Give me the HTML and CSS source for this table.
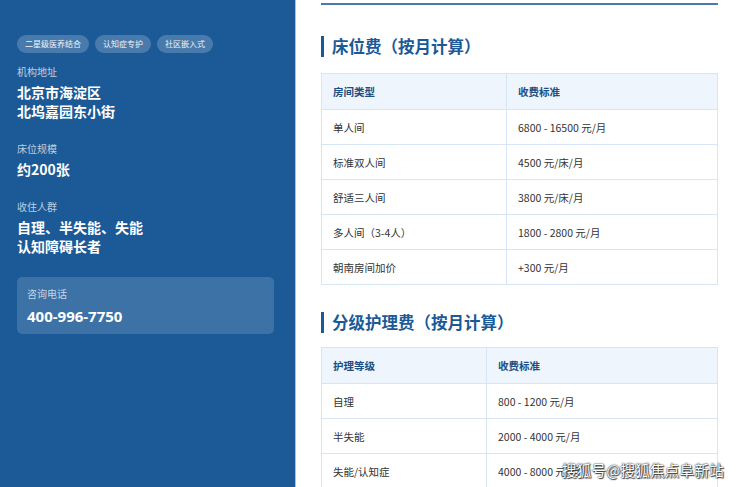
FILE: index.html
```html
<!DOCTYPE html>
<html lang="zh-CN">
<head>
<meta charset="utf-8">
<link rel="stylesheet" href="styles.css">
</head>
<body>
<div class="page">
  <aside class="sidebar">
    <div class="tags">
      <span class="tag">二星级医养结合</span>
      <span class="tag">认知症专护</span>
      <span class="tag">社区嵌入式</span>
    </div>
    <div class="info">
      <div class="label">机构地址</div>
      <div class="value">北京市海淀区<br>北坞嘉园东小街</div>
    </div>
    <div class="info">
      <div class="label">床位规模</div>
      <div class="value">约200张</div>
    </div>
    <div class="info">
      <div class="label">收住人群</div>
      <div class="value">自理、半失能、失能<br>认知障碍长者</div>
    </div>
    <div class="contact">
      <div class="label">咨询电话</div>
      <div class="phone">400-996-7750</div>
    </div>
  </aside>
  <main class="content">
    <div class="topline"></div>
    <section class="block">
      <h2 class="title">床位费（按月计算）</h2>
      <table class="fees fees-bed">
        <thead><tr><th>房间类型</th><th>收费标准</th></tr></thead>
        <tbody>
          <tr><td>单人间</td><td>6800 - 16500 元/月</td></tr>
          <tr><td>标准双人间</td><td>4500 元/床/月</td></tr>
          <tr><td>舒适三人间</td><td>3800 元/床/月</td></tr>
          <tr><td>多人间（3-4人）</td><td>1800 - 2800 元/月</td></tr>
          <tr><td>朝南房间加价</td><td>+300 元/月</td></tr>
        </tbody>
      </table>
    </section>
    <section class="block block-2">
      <h2 class="title">分级护理费（按月计算）</h2>
      <table class="fees fees-care">
        <thead><tr><th>护理等级</th><th>收费标准</th></tr></thead>
        <tbody>
          <tr><td>自理</td><td>800 - 1200 元/月</td></tr>
          <tr><td>半失能</td><td>2000 - 4000 元/月</td></tr>
          <tr><td>失能/认知症</td><td>4000 - 8000 元/月</td></tr>
        </tbody>
      </table>
    </section>
    <div class="watermark">搜狐号@搜狐焦点阜新站</div>
  </main>
</div>
</body>
</html>
```

FILE: styles.css
```css
html, body {
  margin: 0;
  padding: 0;
  height: 100%;
  overflow: hidden;
  background: #ffffff;
}
body {
  font-family: "Noto Sans CJK SC", "Noto Sans", sans-serif;
}
.page {
  display: flex;
  height: 487px;
  overflow: hidden;
}
.sidebar {
  flex: 0 0 296px;
  width: 296px;
  box-sizing: border-box;
  background: #1b5a96;
  border-right: 1px solid #a8c4e2;
  padding: 35px 21px 0 17px;
  color: #fff;
}
.tags {
  display: flex;
  gap: 6px;
  margin-bottom: 12px;
}
.tag {
  display: inline-block;
  background: rgba(255, 255, 255, 0.2);
  border-radius: 9px;
  font-size: 8px;
  line-height: 18px;
  height: 18px;
  padding: 0 8px;
  color: #eef3f9;
}
.info {
  margin-bottom: 21px;
}
.label {
  font-size: 10px;
  line-height: 14px;
  color: rgba(255, 255, 255, 0.72);
  margin-bottom: 4px;
}
.value {
  font-size: 14px;
  line-height: 19px;
  font-weight: 700;
  color: #fff;
}
.contact {
  background: rgba(255, 255, 255, 0.15);
  border-radius: 5px;
  padding: 10px 10px 7px;
  width: 257px;
  box-sizing: border-box;
}
.phone {
  font-family: "Open Sans", "Noto Sans", sans-serif;
  font-size: 15px;
  line-height: 22px;
  font-weight: 700;
  color: #fff;
}
.content {
  position: relative;
  flex: 1;
  padding: 3px 22px 0 25px;
}
.topline {
  height: 2px;
  background: #4b79a8;
  margin-bottom: 31px;
}
.title {
  margin: 0 0 16px;
  border-left: 3px solid #1b5a96;
  padding-left: 8px;
  font-size: 16.5px;
  line-height: 21px;
  font-weight: 700;
  color: #1b5a96;
}
.block-2 {
  margin-top: 27px;
}
.block-2 .title {
  margin-bottom: 14px;
}
.fees {
  width: 397px;
  border-collapse: collapse;
  font-size: 10.5px;
  color: #333;
}
.fees th, .fees td {
  border: 1px solid #d6e6f6;
  text-align: left;
  padding: 0 11px;
}
.fees th {
  background: #eef5fd;
  color: #1d4f80;
  font-weight: 700;
  height: 35px;
}
.fees td {
  height: 34px;
}
.fees-bed th:first-child { width: 162px; }
.fees-care th:first-child { width: 142px; }
.watermark {
  position: absolute;
  left: 266px;
  top: 459px;
  font-size: 14.5px;
  color: #fff;
  white-space: nowrap;
  text-shadow: 0 0 2px #333, 0 0 1px #222, 1px 1px 1px #444;
  letter-spacing: 0.3px;
}
```
